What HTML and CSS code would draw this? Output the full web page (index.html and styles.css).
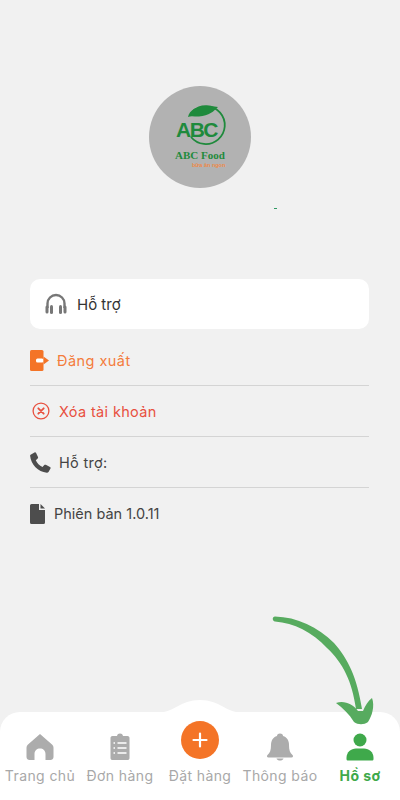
FILE: index.html
```html
<!DOCTYPE html>
<html lang="vi">

<head>
    <meta charset="UTF-8">
    <title>Hồ sơ</title>
    <link rel="stylesheet" href="styles.css">
</head>

<body>
    <div class="screen">
        <div class="profile">
            <div class="avatar">
                <svg class="logo" viewBox="0 0 102 102" width="102" height="102">
                    <path d="M44 25 A19 19 0 1 1 42 51" fill="none" stroke="#1f8a3c" stroke-width="1.800"/>
                    <path d="M39 31 C41 22 52 18 69 21 C65 25 60 30 50 30.500 C46 30.700 42 29.500 39 31Z" fill="#1f8a3c"/>
                    <text class="logoAbc" x="27" y="51">ABC</text>
                    <text class="logoName" x="26" y="73">ABC Food</text>
                    <text class="logoSub" x="43" y="81">bữa ăn ngon</text>
                </svg>
            </div>
            <div class="dot"></div>
        </div>

        <div class="supportCard">
            <svg class="icon" viewBox="0 0 24 24" width="24" height="24">
                <path d="M3.500 16 V11.500 a8.500 8.500 0 0 1 17 0 V16" fill="none" stroke="#777" stroke-width="2.400"/>
                <rect x="1.500" y="13.500" width="3" height="8" rx="1.500" fill="#777"/>
                <rect x="6" y="13" width="3" height="9" rx="1.500" fill="#777"/>
                <rect x="15" y="13" width="3" height="9" rx="1.500" fill="#777"/>
                <rect x="19.500" y="13.500" width="3" height="8" rx="1.500" fill="#777"/>
            </svg>
            <span>Hỗ trợ</span>
        </div>

        <div class="menu">
            <div class="row rowLogout">
                <svg viewBox="0 0 19 21" width="19" height="21">
                    <rect x="0" y="0" width="13.500" height="21" rx="1.500" fill="#f47427"/>
                    <rect x="6" y="8.500" width="7.500" height="4" rx="1.500" fill="#fff"/>
                    <path d="M13.500 6.500 L19 10.500 L13.500 14.500Z" fill="#f47427"/>
                </svg>
                <span>Đăng xuất</span>
            </div>
            <div class="row rowDelete">
                <svg viewBox="0 0 18 18" width="18" height="18">
                    <circle cx="9" cy="9" r="7.900" fill="none" stroke="#e8503f" stroke-width="1.300"/>
                    <path d="M6.300 6.300 L11.700 11.700 M11.700 6.300 L6.300 11.700" stroke="#e8503f" stroke-width="1.800" stroke-linecap="round"/>
                </svg>
                <span>Xóa tài khoản</span>
            </div>
            <div class="row rowPhone">
                <svg viewBox="0 0 21 21" width="21" height="21">
                    <path d="M1 2.500 L4.500 0.500 C5.200 0.200 5.800 0.400 6.100 1 L8 5 C8.300 5.600 8.100 6.100 7.700 6.500 L5.800 8.200 C7 11 9.500 13.600 12.500 15 L14.300 13 C14.700 12.600 15.300 12.500 15.800 12.800 L20 15 C20.600 15.300 20.800 15.900 20.500 16.500 L18.500 20 C18.100 20.600 17.500 20.900 16.800 20.800 C8 19.800 1 12.500 0.100 3.800 C0 3.300 0.400 2.800 1 2.500Z" fill="#4d4d4d"/>
                </svg>
                <span>Hỗ trợ:</span>
            </div>
            <div class="row rowLast">
                <svg viewBox="0 0 15 20" width="15" height="20">
                    <path d="M1.500 0 H9 V6 H15 V18.500 A1.500 1.500 0 0 1 13.500 20 H1.500 A1.500 1.500 0 0 1 0 18.500 V1.500 A1.500 1.500 0 0 1 1.500 0Z" fill="#4d4d4d"/>
                    <path d="M10.500 0 L15 4.500 H10.500Z" fill="#4d4d4d"/>
                </svg>
                <span>Phiên bản 1.0.11</span>
            </div>
        </div>

        <div class="tabbar">
            <svg class="bump" viewBox="0 0 88 14" width="88" height="14">
                <path d="M0 14 C18 14 24 1 44 1 C64 1 70 14 88 14Z" fill="#fff"/>
            </svg>
            <div class="tab">
                <svg viewBox="0 0 28 28" width="28" height="28">
                    <path d="M14 1 L26 11.500 C27 12.500 27.500 13.500 27.500 15 V24 C27.500 26 26 27 24.500 27 H19.500 V21 C19.500 17.500 17 15.500 14 15.500 C11 15.500 8.500 17.500 8.500 21 V27 H3.500 C2 27 0.500 26 0.500 24 V15 C0.500 13.500 1 12.500 2 11.500Z" fill="#acacac"/>
                </svg>
                <span>Trang chủ</span>
            </div>
            <div class="tab">
                <svg viewBox="0 0 28 28" width="28" height="28">
                    <path d="M6.500 3 H11 C11.200 1.300 12.500 0.500 14 0.500 C15.500 0.500 16.800 1.300 17 3 H21.500 C23 3 23.500 4 23.500 5 V25 C23.500 26.500 22.500 27 21.500 27 H6.500 C5.500 27 4.500 26.500 4.500 25 V5 C4.500 4 5 3 6.500 3Z" fill="#acacac"/>
                    <path d="M11.500 10 H20.500 M11.500 15 H20.500 M11.500 20 H20.500 M7.500 10 H9 M7.500 15 H9 M7.500 20 H9" stroke="#fff" stroke-width="1.600" fill="none"/>
                </svg>
                <span>Đơn hàng</span>
            </div>
            <div class="tab tabOrder">
                <div class="orderBtn">
                    <svg viewBox="0 0 18 18" width="18" height="18">
                        <path d="M9 2.500 V15.500 M2.500 9 H15.500" stroke="#fff" stroke-width="2.200" stroke-linecap="round"/>
                    </svg>
                </div>
                <span>Đặt hàng</span>
            </div>
            <div class="tab">
                <svg viewBox="0 0 28 28" width="28" height="28">
                    <path d="M14 0.500 C16 0.500 17 1.800 17 3 C21 4.300 23 7.500 23 12 C23 17 24 20 26.500 22 C27.500 23 27 24.500 25.500 24.500 H2.500 C1 24.500 0.500 23 1.500 22 C4 20 5 17 5 12 C5 7.500 7 4.300 11 3 C11 1.800 12 0.500 14 0.500Z" fill="#acacac"/>
                    <path d="M10.500 25.500 H17.500 C17 27 15.500 27.500 14 27.500 C12.500 27.500 11 27 10.500 25.500Z" fill="#acacac"/>
                </svg>
                <span>Thông báo</span>
            </div>
            <div class="tab tabActive">
                <svg viewBox="0 0 28 28" width="28" height="28">
                    <circle cx="14" cy="7" r="6.500" fill="#3fa94b"/>
                    <path d="M1.500 27.500 C0.500 27.500 0.500 26.500 0.500 25 C0.500 19 5 15.500 10 15.500 H18 C23 15.500 27.500 19 27.500 25 C27.500 26.500 27.500 27.500 26.500 27.500Z" fill="#3fa94b"/>
                </svg>
                <span>Hồ sơ</span>
            </div>
        </div>

        <!-- mui ten chi vao tab ho so -->
        <svg class="arrow" viewBox="0 0 110 115" width="110" height="115">
            <path d="M3 -2.500 C25 -2 46 8 62 24 C76 40 85 58 90 90 L84 90 C80 62 71 44 55 29 C40 13 22 4 3 2.500 C0 2 0 -2.500 3 -2.500Z" fill="#57ab5f"/>
            <path d="M64 84 C72 81 81 85 86 92 L91 92 C93 87 96 82 100 79 C103 87 100 97 96 103 C92 106 86 106 82 103 C77 95 71 89 64 84Z" fill="#57ab5f"/>
        </svg>
    </div>
</body>

</html>
```

FILE: styles.css
```css
* {
    box-sizing: border-box;
}

body {
    margin: 0;
    background: #f1f1f1;
    font-family: "Inter", "Noto Sans", sans-serif;
}

.screen {
    position: relative;
    width: 400px;
    height: 800px;
    overflow: hidden;
    display: flex;
    flex-direction: column;
}

.profile {
    padding-top: 86px;
    height: 279px;
}

.avatar {
    width: 102px;
    height: 102px;
    margin: 0 auto;
    border-radius: 50%;
    background: #b2b2b2;
}

.logo {
    display: block;
}

.logoAbc {
    font-family: "Liberation Sans", sans-serif;
    font-size: 21px;
    font-weight: 700;
    letter-spacing: -1.500px;
    fill: #1f8a3c;
}

.logoName {
    font-family: "Liberation Serif", serif;
    font-size: 11px;
    font-weight: 700;
    fill: #1f8a3c;
}

.logoSub {
    font-family: "Liberation Sans", sans-serif;
    font-size: 5.500px;
    font-weight: 700;
    fill: #ee8a4a;
}

.dot {
    width: 3px;
    height: 1px;
    margin: 20px 0 0 274px;
    background: #2f9a63;
}

.supportCard {
    display: flex;
    align-items: center;
    gap: 9px;
    height: 50px;
    margin: 0 31px 0 30px;
    padding-left: 14px;
    background: #fff;
    border-radius: 10px;
    font-size: 15px;
    color: #333;
}

.supportCard span {
    margin-top: 1px;
}

.menu {
    margin: 6px 31px 0 30px;
}

.row {
    display: flex;
    align-items: center;
    gap: 8px;
    height: 51px;
    border-bottom: 1px solid #d4d4d4;
    font-size: 14.500px;
    color: #444;
}

.rowLast {
    border-bottom: none;
    gap: 9px;
}

.rowLogout {
    color: #f47c3c;
    letter-spacing: .45px;
}

.rowDelete {
    color: #e8503f;
    padding-left: 2px;
    gap: 9px;
    letter-spacing: .35px;
}

.rowPhone {
    letter-spacing: .3px;
}

.tabbar {
    position: relative;
    margin-top: auto;
    height: 88px;
    display: flex;
    background: #fff;
    border-radius: 20px 20px 0 0;
}

.bump {
    position: absolute;
    top: -13px;
    left: 156px;
}

.tab {
    position: relative;
    flex: 1;
    display: flex;
    flex-direction: column;
    align-items: center;
    padding-top: 21px;
    font-size: 14px;
    letter-spacing: .4px;
    color: #a8a8a8;
    white-space: nowrap;
}

.tab span {
    margin-top: 6px;
}

.tabOrder {
    padding-top: 9px;
}

.orderBtn {
    display: flex;
    align-items: center;
    justify-content: center;
    width: 38px;
    height: 38px;
    border-radius: 50%;
    background: #f47427;
    margin-bottom: 2px;
}

.tabActive {
    font-weight: 700;
    color: #3fa94b;
}

.arrow {
    position: absolute;
    top: 619px;
    left: 272px;
    overflow: visible;
}
```
